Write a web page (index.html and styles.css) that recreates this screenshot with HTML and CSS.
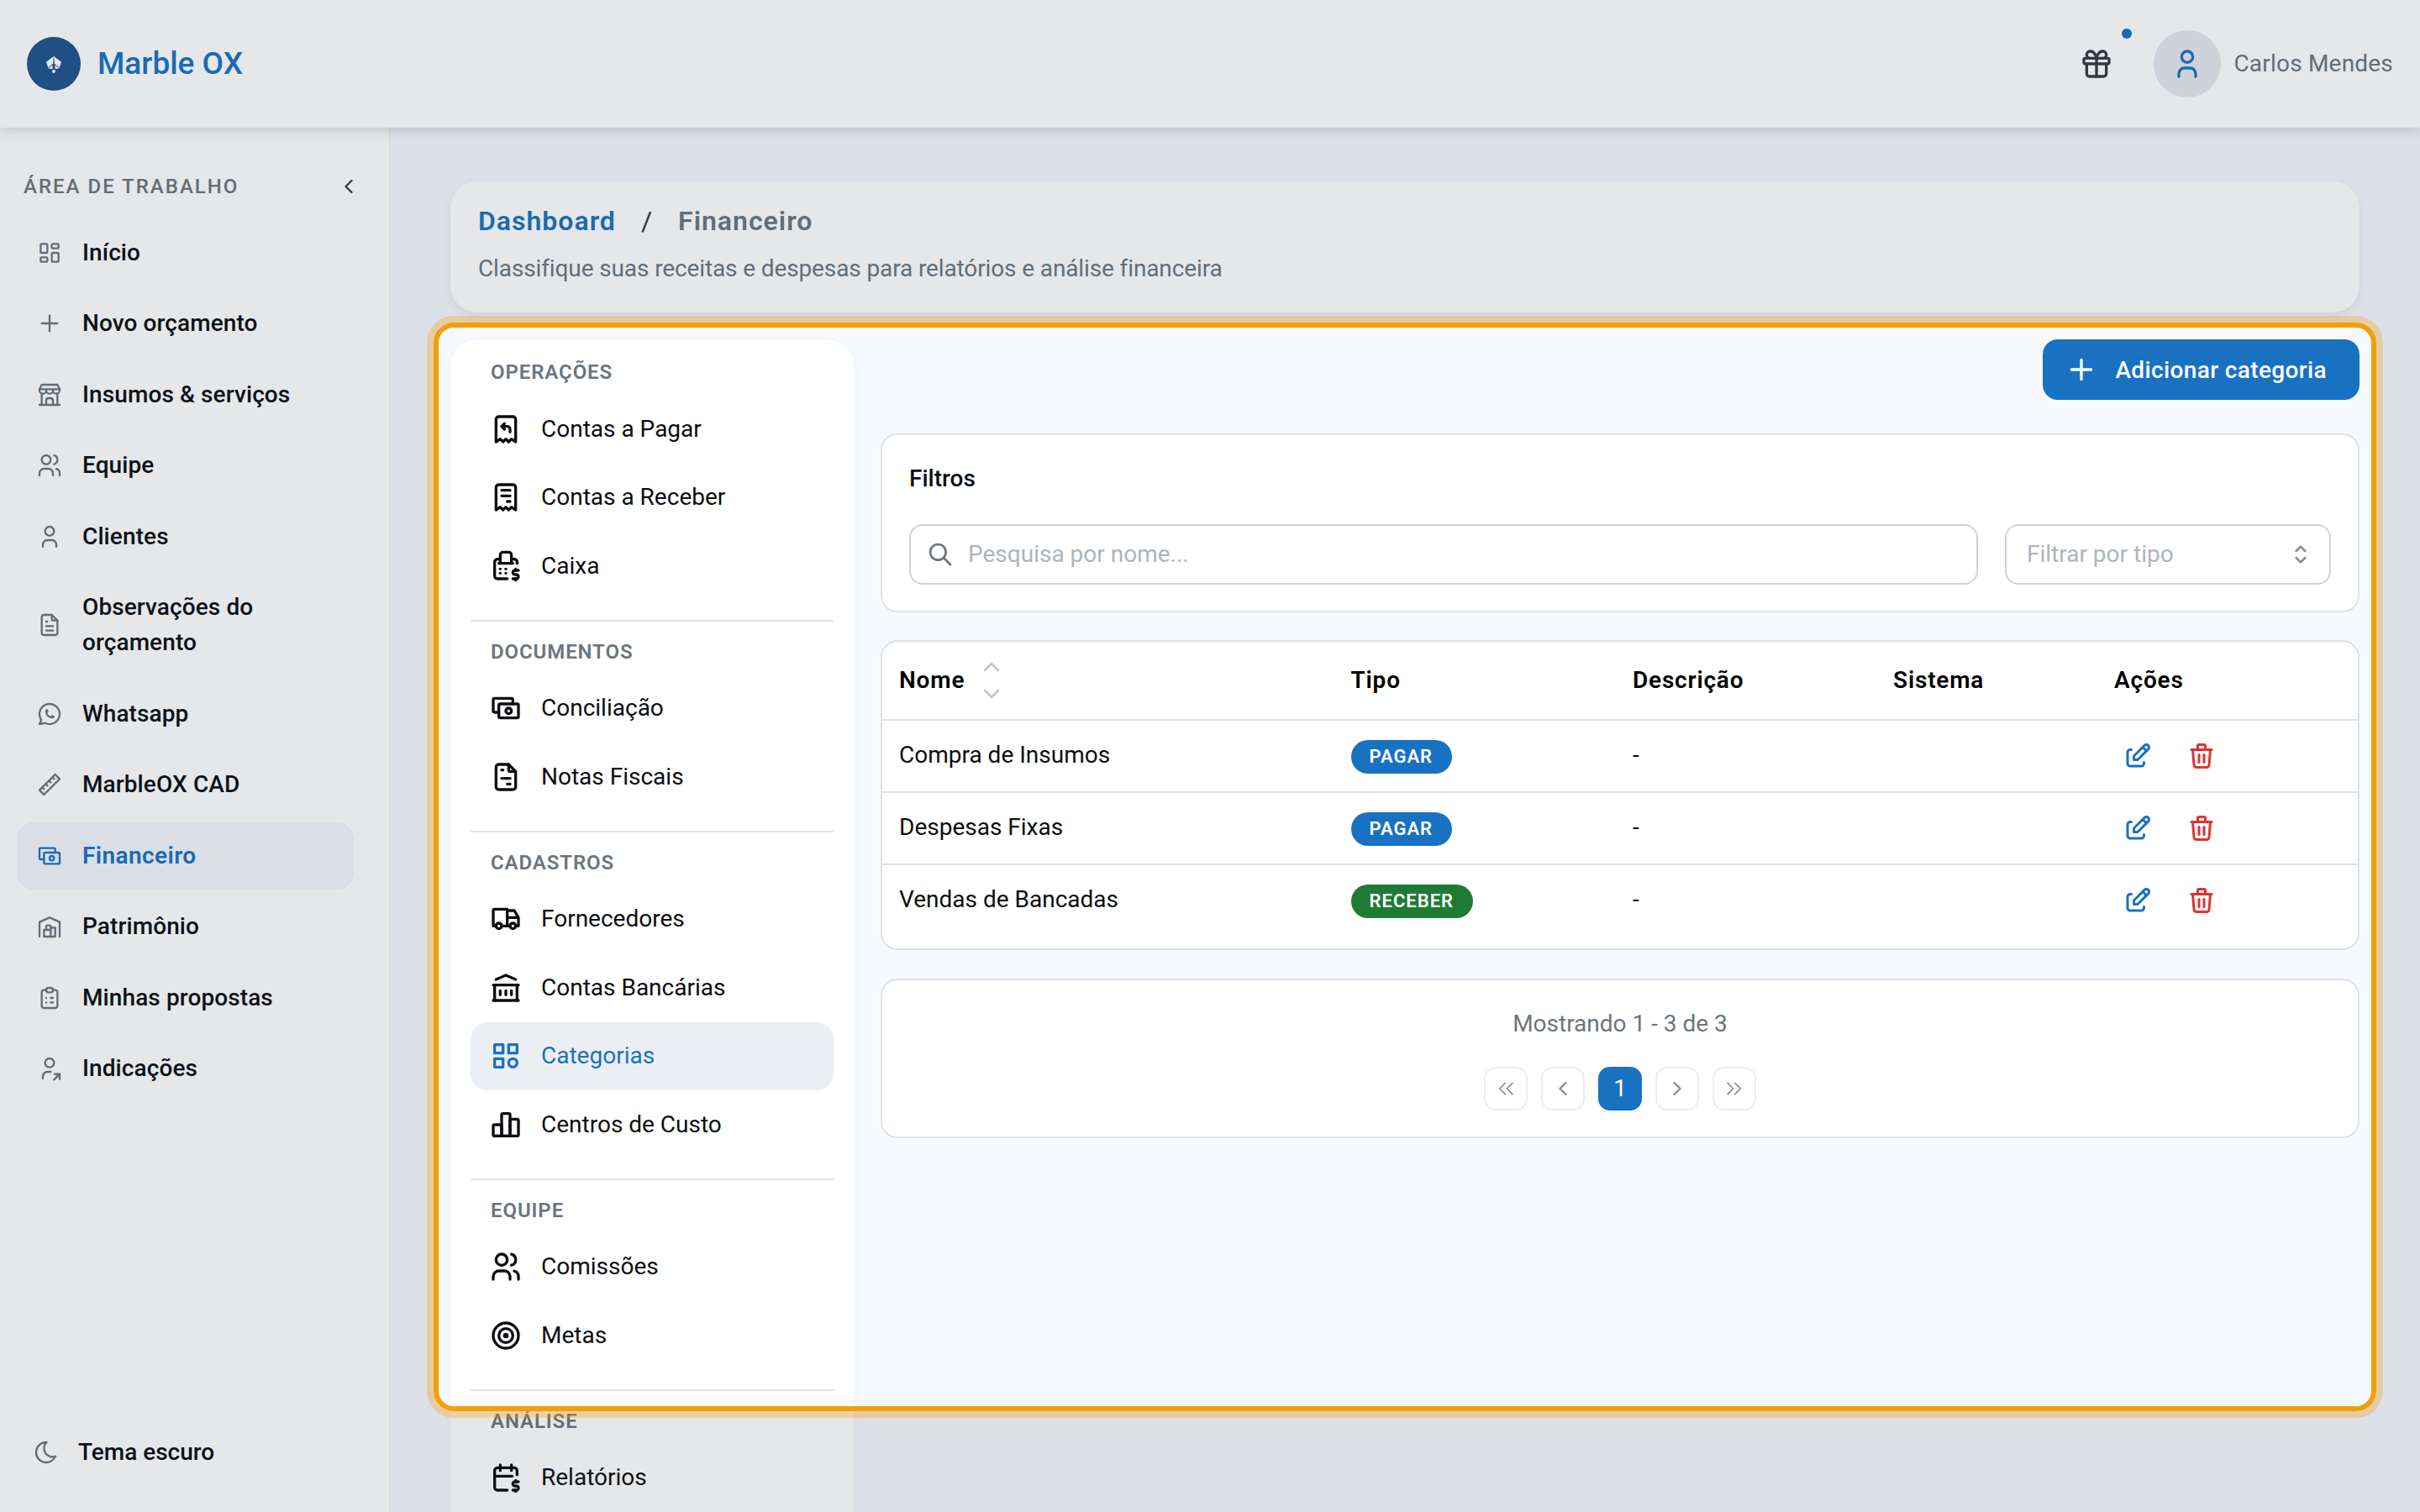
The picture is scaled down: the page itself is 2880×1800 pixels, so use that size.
FILE: index.html
```html
<!DOCTYPE html>
<html lang="pt-BR">
<head>
    <meta charset="UTF-8">
    <meta name="viewport" content="width=device-width, initial-scale=1.0">
    <title>Marble OX - Financeiro</title>
    <link rel="stylesheet" href="styles.css">
</head>
<body>
    <svg class="sprite" xmlns="http://www.w3.org/2000/svg">
        <symbol id="i-dashboard" viewBox="0 0 24 24"><path d="M5 4h4a1 1 0 0 1 1 1v6a1 1 0 0 1 -1 1h-4a1 1 0 0 1 -1 -1v-6a1 1 0 0 1 1 -1"/><path d="M5 16h4a1 1 0 0 1 1 1v2a1 1 0 0 1 -1 1h-4a1 1 0 0 1 -1 -1v-2a1 1 0 0 1 1 -1"/><path d="M15 12h4a1 1 0 0 1 1 1v6a1 1 0 0 1 -1 1h-4a1 1 0 0 1 -1 -1v-6a1 1 0 0 1 1 -1"/><path d="M15 4h4a1 1 0 0 1 1 1v2a1 1 0 0 1 -1 1h-4a1 1 0 0 1 -1 -1v-2a1 1 0 0 1 1 -1"/></symbol>
        <symbol id="i-plus" viewBox="0 0 24 24"><path d="M12 5v14"/><path d="M5 12h14"/></symbol>
        <symbol id="i-store" viewBox="0 0 24 24"><path d="M3 21l18 0"/><path d="M3 7v1a3 3 0 0 0 6 0v-1m0 1a3 3 0 0 0 6 0v-1m0 1a3 3 0 0 0 6 0v-1h-18l2 -4h14l2 4"/><path d="M5 21l0 -10.15"/><path d="M19 21l0 -10.15"/><path d="M9 21v-4a2 2 0 0 1 2 -2h2a2 2 0 0 1 2 2v4"/></symbol>
        <symbol id="i-users" viewBox="0 0 24 24"><path d="M9 7m-4 0a4 4 0 1 0 8 0a4 4 0 1 0 -8 0"/><path d="M3 21v-2a4 4 0 0 1 4 -4h4a4 4 0 0 1 4 4v2"/><path d="M16 3.13a4 4 0 0 1 0 7.75"/><path d="M21 21v-2a4 4 0 0 0 -3 -3.85"/></symbol>
        <symbol id="i-user" viewBox="0 0 24 24"><path d="M8 7a4 4 0 1 0 8 0a4 4 0 0 0 -8 0"/><path d="M6 21v-2a4 4 0 0 1 4 -4h4a4 4 0 0 1 4 4v2"/></symbol>
        <symbol id="i-file-text" viewBox="0 0 24 24"><path d="M14 3v4a1 1 0 0 0 1 1h4"/><path d="M17 21h-10a2 2 0 0 1 -2 -2v-14a2 2 0 0 1 2 -2h7l5 5v11a2 2 0 0 1 -2 2z"/><path d="M9 9l1 0"/><path d="M9 13l6 0"/><path d="M9 17l6 0"/></symbol>
        <symbol id="i-whatsapp" viewBox="0 0 24 24"><path d="M3 21l1.65 -3.8a9 9 0 1 1 3.4 2.9l-5.05 .9"/><path d="M9 10a.5 .5 0 0 0 1 0v-1a.5 .5 0 0 0 -1 0v1a5 5 0 0 0 5 5h1a.5 .5 0 0 0 0 -1h-1a.5 .5 0 0 0 0 1"/></symbol>
        <symbol id="i-ruler" viewBox="0 0 24 24"><path d="M17 3l4 4l-14 14l-4 -4z"/><path d="M16 7l-1.5 -1.5"/><path d="M13 10l-1.5 -1.5"/><path d="M10 13l-1.5 -1.5"/><path d="M7 16l-1.5 -1.5"/></symbol>
        <symbol id="i-cash" viewBox="0 0 24 24"><path d="M7 15h-3a1 1 0 0 1 -1 -1v-8a1 1 0 0 1 1 -1h12a1 1 0 0 1 1 1v3"/><path d="M7 9m0 1a1 1 0 0 1 1 -1h12a1 1 0 0 1 1 1v8a1 1 0 0 1 -1 1h-12a1 1 0 0 1 -1 -1z"/><path d="M12 14a2 2 0 1 0 4 0a2 2 0 0 0 -4 0"/></symbol>
        <symbol id="i-warehouse" viewBox="0 0 24 24"><path d="M3 21v-13l9 -4l9 4v13"/><path d="M13 13h4v8h-10v-6h6"/><path d="M13 21v-9a1 1 0 0 0 -1 -1h-2a1 1 0 0 0 -1 1v3"/></symbol>
        <symbol id="i-clipboard" viewBox="0 0 24 24"><path d="M9 5h-2a2 2 0 0 0 -2 2v12a2 2 0 0 0 2 2h10a2 2 0 0 0 2 -2v-12a2 2 0 0 0 -2 -2h-2"/><path d="M9 3m0 2a2 2 0 0 1 2 -2h2a2 2 0 0 1 2 2v0a2 2 0 0 1 -2 2h-2a2 2 0 0 1 -2 -2z"/><path d="M9 12l.01 0"/><path d="M13 12l2 0"/><path d="M9 16l.01 0"/><path d="M13 16l2 0"/></symbol>
        <symbol id="i-user-share" viewBox="0 0 24 24"><path d="M8 7a4 4 0 1 0 8 0a4 4 0 0 0 -8 0"/><path d="M6 21v-2a4 4 0 0 1 4 -4h3"/><path d="M16 22l5 -5"/><path d="M21 21.5v-4.5h-4.5"/></symbol>
        <symbol id="i-moon" viewBox="0 0 24 24"><path d="M12 3c.132 0 .263 0 .393 0a7.5 7.5 0 0 0 7.92 12.446a9 9 0 1 1 -8.313 -12.454z"/></symbol>
        <symbol id="i-refund" viewBox="0 0 24 24"><path d="M5 21v-16a2 2 0 0 1 2 -2h10a2 2 0 0 1 2 2v16l-3 -2l-2 2l-2 -2l-2 2l-2 -2l-3 2"/><path d="M15 14v-2a2 2 0 0 0 -2 -2h-4l2 -2m0 4l-2 -2"/></symbol>
        <symbol id="i-receipt" viewBox="0 0 24 24"><path d="M5 21v-16a2 2 0 0 1 2 -2h10a2 2 0 0 1 2 2v16l-3 -2l-2 2l-2 -2l-2 2l-2 -2l-3 2m4 -14h6m-6 4h6m-2 4h2"/></symbol>
        <symbol id="i-register" viewBox="0 0 24 24"><path d="M21 15h-2.5a1.5 1.5 0 0 0 0 3h1a1.5 1.5 0 0 1 0 3h-2.5"/><path d="M19 21v1m0 -8v1"/><path d="M13 21h-7a2 2 0 0 1 -2 -2v-10a2 2 0 0 1 2 -2h2m12 3.12v-1.12a2 2 0 0 0 -2 -2h-2"/><path d="M16 10v-6a2 2 0 0 0 -2 -2h-4a2 2 0 0 0 -2 2v6m8 0h-8m8 0h1m-9 0h-1"/><path d="M8 14v.01"/><path d="M8 17v.01"/><path d="M12 13.99v.01"/><path d="M12 17v.01"/></symbol>
        <symbol id="i-invoice" viewBox="0 0 24 24"><path d="M14 3v4a1 1 0 0 0 1 1h4"/><path d="M17 21h-10a2 2 0 0 1 -2 -2v-14a2 2 0 0 1 2 -2h7l5 5v11a2 2 0 0 1 -2 2z"/><path d="M9 7l1 0"/><path d="M9 13l6 0"/><path d="M13 17l2 0"/></symbol>
        <symbol id="i-truck" viewBox="0 0 24 24"><path d="M7 17m-2 0a2 2 0 1 0 4 0a2 2 0 1 0 -4 0"/><path d="M17 17m-2 0a2 2 0 1 0 4 0a2 2 0 1 0 -4 0"/><path d="M5 17h-2v-11a1 1 0 0 1 1 -1h9v12m-4 0h6m4 0h2v-6h-8m0 -5h5l3 5"/></symbol>
        <symbol id="i-bank" viewBox="0 0 24 24"><path d="M3 21l18 0"/><path d="M3 10l18 0"/><path d="M5 6l7 -3l7 3"/><path d="M4 10l0 11"/><path d="M20 10l0 11"/><path d="M8 14l0 3"/><path d="M12 14l0 3"/><path d="M16 14l0 3"/></symbol>
        <symbol id="i-category" viewBox="0 0 24 24"><path d="M4 4h6v6h-6z"/><path d="M14 4h6v6h-6z"/><path d="M4 14h6v6h-6z"/><path d="M17 17m-3 0a3 3 0 1 0 6 0a3 3 0 1 0 -6 0"/></symbol>
        <symbol id="i-chart" viewBox="0 0 24 24"><path d="M3 13a1 1 0 0 1 1 -1h4a1 1 0 0 1 1 1v6a1 1 0 0 1 -1 1h-4a1 1 0 0 1 -1 -1z"/><path d="M15 9a1 1 0 0 1 1 -1h4a1 1 0 0 1 1 1v10a1 1 0 0 1 -1 1h-4a1 1 0 0 1 -1 -1z"/><path d="M9 5a1 1 0 0 1 1 -1h4a1 1 0 0 1 1 1v14a1 1 0 0 1 -1 1h-4a1 1 0 0 1 -1 -1z"/><path d="M4 20h14"/></symbol>
        <symbol id="i-target" viewBox="0 0 24 24"><path d="M12 12m-1 0a1 1 0 1 0 2 0a1 1 0 1 0 -2 0"/><path d="M12 12m-5 0a5 5 0 1 0 10 0a5 5 0 1 0 -10 0"/><path d="M12 12m-9 0a9 9 0 1 0 18 0a9 9 0 1 0 -18 0"/></symbol>
        <symbol id="i-calendar" viewBox="0 0 24 24"><path d="M13 21h-7a2 2 0 0 1 -2 -2v-12a2 2 0 0 1 2 -2h12a2 2 0 0 1 2 2v3"/><path d="M16 3v4"/><path d="M8 3v4"/><path d="M4 11h12.5"/><path d="M21 15h-2.5a1.5 1.5 0 0 0 0 3h1a1.5 1.5 0 0 1 0 3h-2.5"/><path d="M19 21v1m0 -8v1"/></symbol>
        <symbol id="i-gift" viewBox="0 0 24 24"><path d="M3 8m0 1a1 1 0 0 1 1 -1h16a1 1 0 0 1 1 1v2a1 1 0 0 1 -1 1h-16a1 1 0 0 1 -1 -1z"/><path d="M12 8l0 13"/><path d="M19 12v7a2 2 0 0 1 -2 2h-10a2 2 0 0 1 -2 -2v-7"/><path d="M7.5 8a2.5 2.5 0 0 1 0 -5a4.8 8 0 0 1 4.5 5a4.8 8 0 0 1 4.5 -5a2.5 2.5 0 0 1 0 5"/></symbol>
        <symbol id="i-edit" viewBox="0 0 24 24"><path d="M7 7h-1a2 2 0 0 0 -2 2v9a2 2 0 0 0 2 2h9a2 2 0 0 0 2 -2v-1"/><path d="M20.385 6.585a2.1 2.1 0 0 0 -2.97 -2.97l-8.415 8.385v3h3l8.385 -8.415z"/><path d="M16 5l3 3"/></symbol>
        <symbol id="i-trash" viewBox="0 0 24 24"><path d="M4 7l16 0"/><path d="M10 11l0 6"/><path d="M14 11l0 6"/><path d="M5 7l1 12a2 2 0 0 0 2 2h8a2 2 0 0 0 2 -2l1 -12"/><path d="M9 7v-3a1 1 0 0 1 1 -1h4a1 1 0 0 1 1 1v3"/></symbol>
        <symbol id="i-search" viewBox="0 0 24 24"><path d="M10 10m-7 0a7 7 0 1 0 14 0a7 7 0 1 0 -14 0"/><path d="M21 21l-6 -6"/></symbol>
        <symbol id="i-selector" viewBox="0 0 24 24"><path d="M8 9l4 -4l4 4"/><path d="M16 15l-4 4l-4 -4"/></symbol>
        <symbol id="i-left" viewBox="0 0 24 24"><path d="M15 6l-6 6l6 6"/></symbol>
        <symbol id="i-right" viewBox="0 0 24 24"><path d="M9 6l6 6l-6 6"/></symbol>
        <symbol id="i-up" viewBox="0 0 24 24"><path d="M6 15l6 -6l6 6"/></symbol>
        <symbol id="i-down" viewBox="0 0 24 24"><path d="M6 9l6 6l6 -6"/></symbol>
        <symbol id="i-first" viewBox="0 0 24 24"><path d="M11.5 7l-5 5l5 5"/><path d="M18 7l-5 5l5 5"/></symbol>
        <symbol id="i-last" viewBox="0 0 24 24"><path d="M6 7l5 5l-5 5"/><path d="M12.5 7l5 5l-5 5"/></symbol>
    </svg>

    <header class="topbar">
        <div class="brand">
            <span class="brand-logo">
                <svg viewBox="0 0 24 24" width="36" height="36"><path class="logo-fill" d="M12 6l6 4.5-1.5 4.5-4-3.2v-2zM12 6l-6 4.5 1.5 4.5 4-3.2v-2z"/><path class="logo-fill" d="M7.5 15.5l3.5-2.5v3.2zM16.5 15.5l-3.5-2.5v3.2z"/><circle class="logo-fill" cx="12" cy="18" r="1.3"/></svg>
            </span>
            <span class="brand-name">Marble OX</span>
        </div>
        <div class="top-actions">
            <span class="gift">
                <svg class="icon icon-gift"><use href="#i-gift"/></svg>
                <span class="gift-dot"></span>
            </span>
            <span class="avatar"><svg class="icon icon-avatar"><use href="#i-user"/></svg></span>
            <span class="user-name">Carlos Mendes</span>
        </div>
    </header>

    <div class="layout">
        <aside class="sidebar">
            <div class="sidebar-head">
                <span class="sidebar-title">Área de trabalho</span>
                <svg class="icon icon-collapse"><use href="#i-left"/></svg>
            </div>
            <nav class="side-nav">
                <a class="side-link"><svg class="icon"><use href="#i-dashboard"/></svg><span>Início</span></a>
                <a class="side-link"><svg class="icon"><use href="#i-plus"/></svg><span>Novo orçamento</span></a>
                <a class="side-link"><svg class="icon"><use href="#i-store"/></svg><span>Insumos &amp; serviços</span></a>
                <a class="side-link"><svg class="icon"><use href="#i-users"/></svg><span>Equipe</span></a>
                <a class="side-link"><svg class="icon"><use href="#i-user"/></svg><span>Clientes</span></a>
                <a class="side-link"><svg class="icon"><use href="#i-file-text"/></svg><span>Observações do<br>orçamento</span></a>
                <a class="side-link"><svg class="icon"><use href="#i-whatsapp"/></svg><span>Whatsapp</span></a>
                <a class="side-link"><svg class="icon"><use href="#i-ruler"/></svg><span>MarbleOX CAD</span></a>
                <a class="side-link active"><svg class="icon"><use href="#i-cash"/></svg><span>Financeiro</span></a>
                <a class="side-link"><svg class="icon"><use href="#i-warehouse"/></svg><span>Patrimônio</span></a>
                <a class="side-link"><svg class="icon"><use href="#i-clipboard"/></svg><span>Minhas propostas</span></a>
                <a class="side-link"><svg class="icon"><use href="#i-user-share"/></svg><span>Indicações</span></a>
            </nav>
            <a class="theme-toggle"><svg class="icon"><use href="#i-moon"/></svg><span>Tema escuro</span></a>
        </aside>

        <main class="main">
            <section class="page-head">
                <div class="crumbs">
                    <a class="crumb-link">Dashboard</a>
                    <span class="crumb-sep">/</span>
                    <span class="crumb-current">Financeiro</span>
                </div>
                <p class="page-desc">Classifique suas receitas e despesas para relatórios e análise financeira</p>
            </section>

            <div class="page-body">
                <nav class="sub-nav">
                    <div class="sub-group">
                        <h4 class="sub-label">Operações</h4>
                        <a class="sub-link"><svg class="icon"><use href="#i-refund"/></svg><span>Contas a Pagar</span></a>
                        <a class="sub-link"><svg class="icon"><use href="#i-receipt"/></svg><span>Contas a Receber</span></a>
                        <a class="sub-link"><svg class="icon"><use href="#i-register"/></svg><span>Caixa</span></a>
                    </div>
                    <div class="sub-group">
                        <h4 class="sub-label">Documentos</h4>
                        <a class="sub-link"><svg class="icon"><use href="#i-cash"/></svg><span>Conciliação</span></a>
                        <a class="sub-link"><svg class="icon"><use href="#i-invoice"/></svg><span>Notas Fiscais</span></a>
                    </div>
                    <div class="sub-group">
                        <h4 class="sub-label">Cadastros</h4>
                        <a class="sub-link"><svg class="icon"><use href="#i-truck"/></svg><span>Fornecedores</span></a>
                        <a class="sub-link"><svg class="icon"><use href="#i-bank"/></svg><span>Contas Bancárias</span></a>
                        <a class="sub-link active"><svg class="icon"><use href="#i-category"/></svg><span>Categorias</span></a>
                        <a class="sub-link"><svg class="icon"><use href="#i-chart"/></svg><span>Centros de Custo</span></a>
                    </div>
                    <div class="sub-group">
                        <h4 class="sub-label">Equipe</h4>
                        <a class="sub-link"><svg class="icon"><use href="#i-users"/></svg><span>Comissões</span></a>
                        <a class="sub-link"><svg class="icon"><use href="#i-target"/></svg><span>Metas</span></a>
                    </div>
                    <div class="sub-group">
                        <h4 class="sub-label">Análise</h4>
                        <a class="sub-link"><svg class="icon"><use href="#i-calendar"/></svg><span>Relatórios</span></a>
                    </div>
                </nav>

                <div class="content">
                    <div class="toolbar">
                        <button class="btn-add"><svg class="icon"><use href="#i-plus"/></svg>Adicionar categoria</button>
                    </div>

                    <section class="card filters">
                        <h3 class="filters-title">Filtros</h3>
                        <div class="filters-row">
                            <div class="field field-search">
                                <svg class="icon"><use href="#i-search"/></svg>
                                <span class="placeholder">Pesquisa por nome...</span>
                            </div>
                            <div class="field field-select">
                                <span class="placeholder">Filtrar por tipo</span>
                                <svg class="icon"><use href="#i-selector"/></svg>
                            </div>
                        </div>
                    </section>

                    <section class="card table-card">
                        <table class="data-table">
                            <colgroup>
                                <col class="col-name"><col class="col-type"><col class="col-desc"><col class="col-system"><col class="col-actions">
                            </colgroup>
                            <thead>
                                <tr>
                                    <th>
                                        <div class="th-sort">Nome
                                            <span class="sort-arrows">
                                                <svg class="icon"><use href="#i-up"/></svg>
                                                <svg class="icon"><use href="#i-down"/></svg>
                                            </span>
                                        </div>
                                    </th>
                                    <th>Tipo</th>
                                    <th>Descrição</th>
                                    <th>Sistema</th>
                                    <th>Ações</th>
                                </tr>
                            </thead>
                            <tbody>
                                <tr>
                                    <td>Compra de Insumos</td>
                                    <td><span class="badge badge-pay">Pagar</span></td>
                                    <td>-</td>
                                    <td></td>
                                    <td><div class="row-actions"><span class="act act-edit"><svg class="icon"><use href="#i-edit"/></svg></span><span class="act act-del"><svg class="icon"><use href="#i-trash"/></svg></span></div></td>
                                </tr>
                                <tr>
                                    <td>Despesas Fixas</td>
                                    <td><span class="badge badge-pay">Pagar</span></td>
                                    <td>-</td>
                                    <td></td>
                                    <td><div class="row-actions"><span class="act act-edit"><svg class="icon"><use href="#i-edit"/></svg></span><span class="act act-del"><svg class="icon"><use href="#i-trash"/></svg></span></div></td>
                                </tr>
                                <tr>
                                    <td>Vendas de Bancadas</td>
                                    <td><span class="badge badge-get">Receber</span></td>
                                    <td>-</td>
                                    <td></td>
                                    <td><div class="row-actions"><span class="act act-edit"><svg class="icon"><use href="#i-edit"/></svg></span><span class="act act-del"><svg class="icon"><use href="#i-trash"/></svg></span></div></td>
                                </tr>
                            </tbody>
                        </table>
                    </section>

                    <section class="card pager-card">
                        <p class="pager-info">Mostrando 1 - 3 de 3</p>
                        <div class="pager">
                            <span class="page-btn"><svg class="icon icon-double"><use href="#i-first"/></svg></span>
                            <span class="page-btn"><svg class="icon"><use href="#i-left"/></svg></span>
                            <span class="page-btn current">1</span>
                            <span class="page-btn"><svg class="icon"><use href="#i-right"/></svg></span>
                            <span class="page-btn"><svg class="icon icon-double"><use href="#i-last"/></svg></span>
                        </div>
                    </section>
                </div>
            </div>
        </main>
    </div>

    <!-- tour highlight: dims everything around it -->
    <div class="spotlight"></div>
</body>
</html>
```

FILE: styles.css
```css
* {
    box-sizing: border-box;
}
body {
    margin: 0;
    width: 2880px;
    height: 1800px;
    overflow: hidden;
    position: relative;
    display: flex;
    flex-direction: column;
    font-family: Roboto, "Liberation Sans", sans-serif;
    font-size: 28px;
    line-height: 42px;
    color: #0b0d10;
    background-color: #f6f9fd;
}
h3, h4, p {
    margin: 0;
}
.sprite {
    display: none;
}
.icon {
    display: block;
    flex: none;
    width: 32px;
    height: 32px;
    fill: none;
    stroke: currentColor;
    stroke-width: 2;
    stroke-linecap: round;
    stroke-linejoin: round;
}

/* Top bar */
.topbar {
    flex: none;
    height: 152px;
    display: flex;
    align-items: center;
    justify-content: space-between;
    padding: 0 32px;
    background-color: #fff;
    box-shadow: 0 4px 14px rgba(0, 0, 0, .14);
    position: relative;
    z-index: 2;
}
.brand {
    display: flex;
    align-items: center;
    gap: 20px;
}
.brand-logo {
    width: 64px;
    height: 64px;
    display: flex;
    align-items: center;
    justify-content: center;
    border-radius: 50%;
    background-color: #1e528c;
}
.logo-fill {
    fill: #fff;
}
.brand-name {
    font-size: 37px;
    font-weight: 500;
    color: #1971c2;
}
.top-actions {
    display: flex;
    align-items: center;
}
.gift {
    position: relative;
    width: 40px;
    height: 40px;
    margin-right: 48px;
    color: #343a40;
}
.icon-gift {
    width: 40px;
    height: 40px;
}
.gift-dot {
    position: absolute;
    top: -22px;
    left: 50px;
    width: 12px;
    height: 12px;
    border-radius: 50%;
    background-color: #1971c2;
}
.avatar {
    width: 80px;
    height: 80px;
    margin-right: 15px;
    display: flex;
    align-items: center;
    justify-content: center;
    border-radius: 50%;
    background-color: #e6e8ed;
    color: #1971c2;
}
.icon-avatar {
    width: 40px;
    height: 40px;
}
.user-name {
    letter-spacing: .2px;
    color: #6c757d;
}

.layout {
    flex: 1;
    min-height: 0;
    display: flex;
}

/* Left sidebar */
.sidebar {
    flex: none;
    width: 464px;
    padding: 49px 42px 50px 20px;
    display: flex;
    flex-direction: column;
    background-color: #fff;
    border-right: 1px solid #e9ecef;
}
.sidebar-head {
    display: flex;
    align-items: center;
    justify-content: space-between;
    height: 42px;
    margin-bottom: 17.5px;
    padding-left: 8px;
}
.sidebar-title {
    font-size: 24px;
    font-weight: 500;
    letter-spacing: 2px;
    text-transform: uppercase;
    color: #6c757d;
}
.icon-collapse {
    width: 28px;
    height: 28px;
    margin-right: -8px;
    color: #343a40;
}
.side-nav {
    display: flex;
    flex-direction: column;
    gap: 4.5px;
}
.side-link {
    display: flex;
    align-items: center;
    gap: 23px;
    padding: 19px 23px;
    border-radius: 20px;
    font-weight: 500;
    letter-spacing: .1px;
    color: #0b0d10;
}
.side-link .icon {
    color: #6c757d;
    stroke-width: 1.75;
}
.side-link.active {
    background-color: #f2f6fb;
    color: #1971c2;
    font-weight: 600;
    letter-spacing: .4px;
}
.side-link.active .icon {
    color: #1971c2;
}
.theme-toggle {
    margin-top: auto;
    display: flex;
    align-items: center;
    gap: 22px;
    padding-left: 19px;
    font-weight: 500;
}
.theme-toggle .icon {
    color: #6c757d;
    stroke-width: 1.75;
}

/* Main area */
.main {
    flex: 1;
    min-width: 0;
    padding: 64px 72px 0;
    overflow: hidden;
    display: flex;
    flex-direction: column;
    background-color: #f6f9fd;
}
.page-head {
    flex: none;
    height: 156px;
    margin-bottom: 32px;
    padding: 26px 33px;
    border-radius: 32px;
    background-color: #fff;
    box-shadow: 0 4px 12px rgba(0, 0, 0, .08);
}
.crumbs {
    display: flex;
    align-items: center;
    gap: 30px;
    font-size: 32px;
    font-weight: 600;
    line-height: 42px;
    letter-spacing: 1px;
}
.crumb-link {
    color: #1971c2;
}
.crumb-sep {
    font-weight: 400;
    color: #343a40;
}
.crumb-current {
    color: #6c757d;
}
.page-desc {
    margin-top: 15px;
    letter-spacing: -.12px;
    color: #6c757d;
}
.page-body {
    flex: 1;
    min-height: 0;
    display: flex;
    gap: 32px;
}

/* Secondary nav */
.sub-nav {
    flex: none;
    width: 480px;
    min-height: 1500px;
    padding: 21px 24px 0;
    border-radius: 32px;
    background-color: #fff;
    box-shadow: 0 2px 8px rgba(0, 0, 0, .04);
}
.sub-group {
    padding: 0 0 23.5px;
    margin-bottom: 17.5px;
    border-bottom: 2px solid #dee2e6;
}
.sub-group:last-child {
    border-bottom: none;
}
.sub-label {
    margin-bottom: 9px;
    padding-left: 24px;
    font-size: 24px;
    line-height: 36px;
    font-weight: 600;
    letter-spacing: .9px;
    text-transform: uppercase;
    color: #6c757d;
}
.sub-link {
    height: 81.5px;
    display: flex;
    align-items: center;
    gap: 22px;
    padding-left: 22px;
    border-radius: 20px;
}
.sub-link .icon {
    width: 40px;
    height: 40px;
}
.sub-link.active {
    background-color: #ebeff4;
    color: #1971c2;
}

/* Right content */
.content {
    flex: 1;
    min-width: 0;
    display: flex;
    flex-direction: column;
}
.toolbar {
    display: flex;
    justify-content: flex-end;
    margin-bottom: 40px;
}
.btn-add {
    height: 72px;
    display: flex;
    align-items: center;
    gap: 20px;
    padding: 0 39px 0 26px;
    border: none;
    border-radius: 18px;
    font-family: inherit;
    font-size: 28px;
    font-weight: 500;
    letter-spacing: .37px;
    color: #fff;
    background-color: #1971c2;
}
.btn-add .icon {
    width: 40px;
    height: 40px;
}
.card {
    background-color: #fff;
    border: 2px solid #dee2e6;
    border-radius: 20px;
}
.filters {
    height: 213px;
    margin-bottom: 33px;
    padding: 31px 32px;
}
.filters-title {
    margin-bottom: 33px;
    font-size: 28px;
    font-weight: 500;
}
.filters-row {
    display: flex;
    gap: 32px;
}
.field {
    height: 72px;
    display: flex;
    align-items: center;
    border: 2px solid #ced4da;
    border-radius: 16px;
}
.field-search {
    flex: 1;
    gap: 17px;
    padding-left: 19px;
}
.field-search .icon {
    color: #6c757d;
}
.field-select {
    flex: none;
    width: 388px;
    justify-content: space-between;
    padding: 0 18px 0 24px;
}
.field-select .icon {
    color: #868e96;
}
.placeholder {
    color: #adb5bd;
}

/* Table */
.table-card {
    height: 369px;
    margin-bottom: 34px;
}
.data-table {
    width: 100%;
    table-layout: fixed;
    border-collapse: separate;
    border-spacing: 0;
}
.col-name { width: 537.5px; }
.col-type { width: 335.5px; }
.col-desc { width: 310px; }
.col-system { width: 263px; }
.data-table th {
    height: 94px;
    padding: 0 20px;
    text-align: left;
    font-weight: 600;
    letter-spacing: .8px;
    color: #000;
    border-bottom: 2px solid #dee2e6;
}
.data-table td {
    height: 86px;
    padding: 20px 20px 0;
    vertical-align: top;
    border-bottom: 2px solid #dee2e6;
}
.data-table tr:last-child td {
    height: 100px;
    border-bottom: none;
}
.th-sort {
    display: flex;
    align-items: center;
    gap: 16px;
}
.sort-arrows {
    display: flex;
    flex-direction: column;
    color: #c1c6cd;
}
.badge {
    display: inline-block;
    height: 40px;
    margin-top: 3px;
    padding: 0 23px 0 22px;
    border-radius: 20px;
    font-size: 22px;
    line-height: 40px;
    font-weight: 600;
    letter-spacing: 1px;
    text-transform: uppercase;
    vertical-align: top;
    color: #fff;
}
.badge-pay {
    background-color: #1971c2;
}
.badge-get {
    background-color: #1e7b34;
}
.row-actions {
    display: flex;
    gap: 20px;
    margin-top: 4px;
}
.act {
    width: 56px;
    height: 36px;
    display: flex;
    justify-content: center;
}
.act .icon {
    width: 36px;
    height: 36px;
}
.act-edit {
    color: #1971c2;
}
.act-del {
    color: #e03131;
}

/* Pagination */
.pager-card {
    height: 190px;
    padding-top: 31px;
    text-align: center;
}
.pager-info {
    margin-bottom: 30px;
    color: #6c757d;
}
.pager {
    display: flex;
    justify-content: center;
    gap: 16px;
}
.page-btn {
    width: 52px;
    height: 52px;
    display: flex;
    align-items: center;
    justify-content: center;
    border: 2px solid #e9eef4;
    border-radius: 14px;
    color: #868e96;
}
.page-btn .icon {
    width: 28px;
    height: 28px;
}
.page-btn .icon-double {
    width: 32px;
    height: 32px;
    stroke-width: 1.25;
}
.page-btn.current {
    border-color: #1971c2;
    background-color: #1971c2;
    color: #fff;
}

/* Tour highlight */
.spotlight {
    position: absolute;
    top: 384px;
    left: 516px;
    width: 2312px;
    height: 1296px;
    border: 6px solid #f59e0b;
    border-radius: 24px;
    box-shadow: 0 0 0 8px rgba(245, 158, 11, .3), 0 0 0 4000px rgba(38, 55, 70, .12);
    z-index: 5;
    pointer-events: none;
}
```
